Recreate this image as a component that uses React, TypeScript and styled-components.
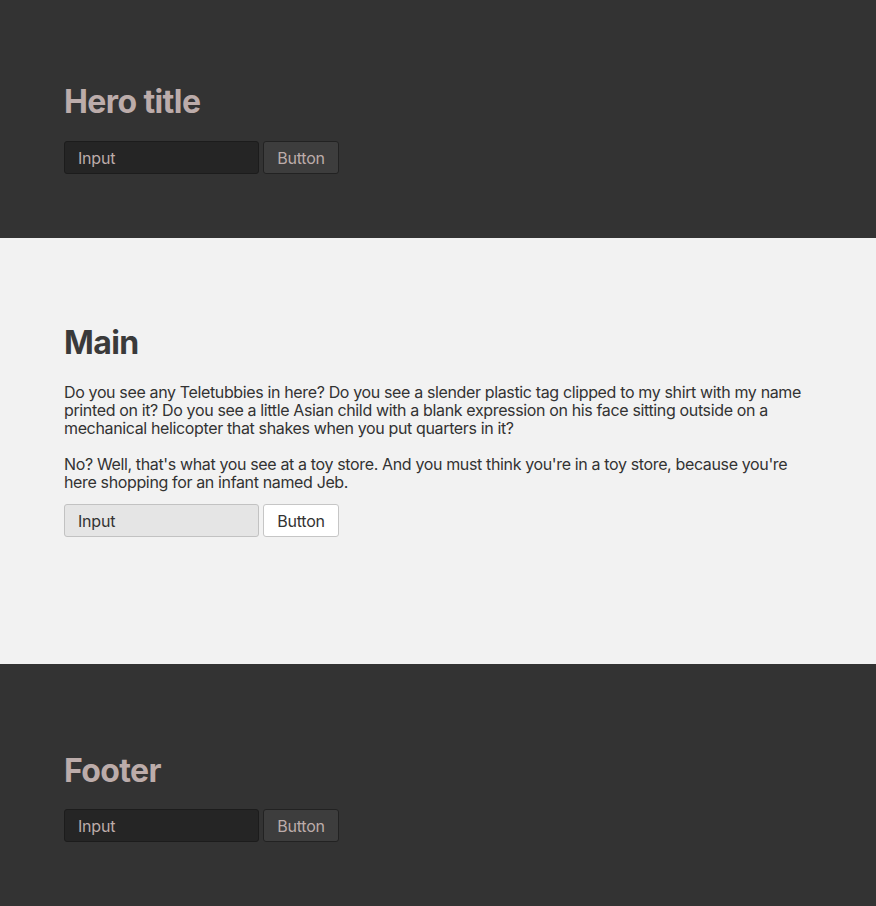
import React from "react";
import styled, { createGlobalStyle } from "styled-components";

type Tone = "dark" | "light";

const GlobalStyle = createGlobalStyle`
  html, body {
    margin: 0;
    padding: 0;
  }
  body {
    font-family: Inter, "Noto Sans", "Liberation Sans", sans-serif;
    font-size: 16px;
  }
`;

const Section = styled.section<{ $tone: Tone; $top: number; $bottom: number }>`
  background: ${({ $tone }) => ($tone === "dark" ? "#333333" : "#f2f2f2")};
  color: ${({ $tone }) => ($tone === "dark" ? "#bcacaa" : "#333333")};
  padding: ${({ $top }) => $top}px 64px ${({ $bottom }) => $bottom}px;
`;

const Title = styled.h1<{ $tone: Tone; $gap: number }>`
  margin: 0 0 ${({ $gap }) => $gap}px;
  font-size: 32px;
  line-height: 40px;
  font-weight: 700;
  letter-spacing: -0.6px;
  color: ${({ $tone }) => ($tone === "dark" ? "#bcacaa" : "#3a3a3a")};
`;

const Text = styled.p`
  margin: 0 0 18px;
  max-width: 748px;
  font-size: 16px;
  line-height: 18px;
  letter-spacing: -0.36px;
  color: #333333;

  &:last-of-type {
    margin-bottom: 13px;
  }
`;

const Form = styled.div`
  display: flex;
  gap: 4px;
  align-items: center;
`;

const Input = styled.input<{ $tone: Tone }>`
  box-sizing: border-box;
  width: 195px;
  height: 33px;
  padding: 0 13px;
  font: inherit;
  font-size: 16px;
  letter-spacing: -0.2px;
  border-radius: 3px;
  outline: none;
  background: ${({ $tone }) => ($tone === "dark" ? "#252525" : "#e5e5e5")};
  border: 1px solid ${({ $tone }) => ($tone === "dark" ? "#1c1c1c" : "#c2c2c2")};
  color: ${({ $tone }) => ($tone === "dark" ? "#bcacaa" : "#333333")};
  &::placeholder {
    color: ${({ $tone }) => ($tone === "dark" ? "#bcacaa" : "#333333")};
    opacity: 1;
  }
`;

const Button = styled.button<{ $tone: Tone }>`
  box-sizing: border-box;
  width: 76px;
  height: 33px;
  padding: 0;
  font: inherit;
  font-size: 16px;
  letter-spacing: -0.2px;
  border-radius: 3px;
  cursor: pointer;
  background: ${({ $tone }) => ($tone === "dark" ? "#3d3d3d" : "#ffffff")};
  border: 1px solid ${({ $tone }) => ($tone === "dark" ? "#222222" : "#c6c6c6")};
  color: ${({ $tone }) => ($tone === "dark" ? "#bcacaa" : "#333333")};
`;

const InputRow = ({ tone }: { tone: Tone }) => (
  <Form>
    <Input $tone={tone} placeholder="Input" />
    <Button $tone={tone}>Button</Button>
  </Form>
);

const App = () => {
  return (
    <>
      <GlobalStyle />
      <Section $tone="dark" $top={82} $bottom={64}>
        <Title $tone="dark" $gap={19}>Hero title</Title>
        <InputRow tone="dark" />
      </Section>
      <Section $tone="light" $top={85} $bottom={127}>
        <Title $tone="light" $gap={20}>Main</Title>
        <Text>
          Do you see any Teletubbies in here? Do you see a slender plastic tag
          clipped to my shirt with my name printed on it? Do you see a little
          Asian child with a blank expression on his face sitting outside on a
          mechanical helicopter that shakes when you put quarters in it?
        </Text>
        <Text>
          No? Well, that's what you see at a toy store. And you must think
          you're in a toy store, because you're here shopping for an infant
          named Jeb.
        </Text>
        <InputRow tone="light" />
      </Section>
      <Section $tone="dark" $top={87} $bottom={65}>
        <Title $tone="dark" $gap={18}>Footer</Title>
        <InputRow tone="dark" />
      </Section>
    </>
  );
};

export default App;
